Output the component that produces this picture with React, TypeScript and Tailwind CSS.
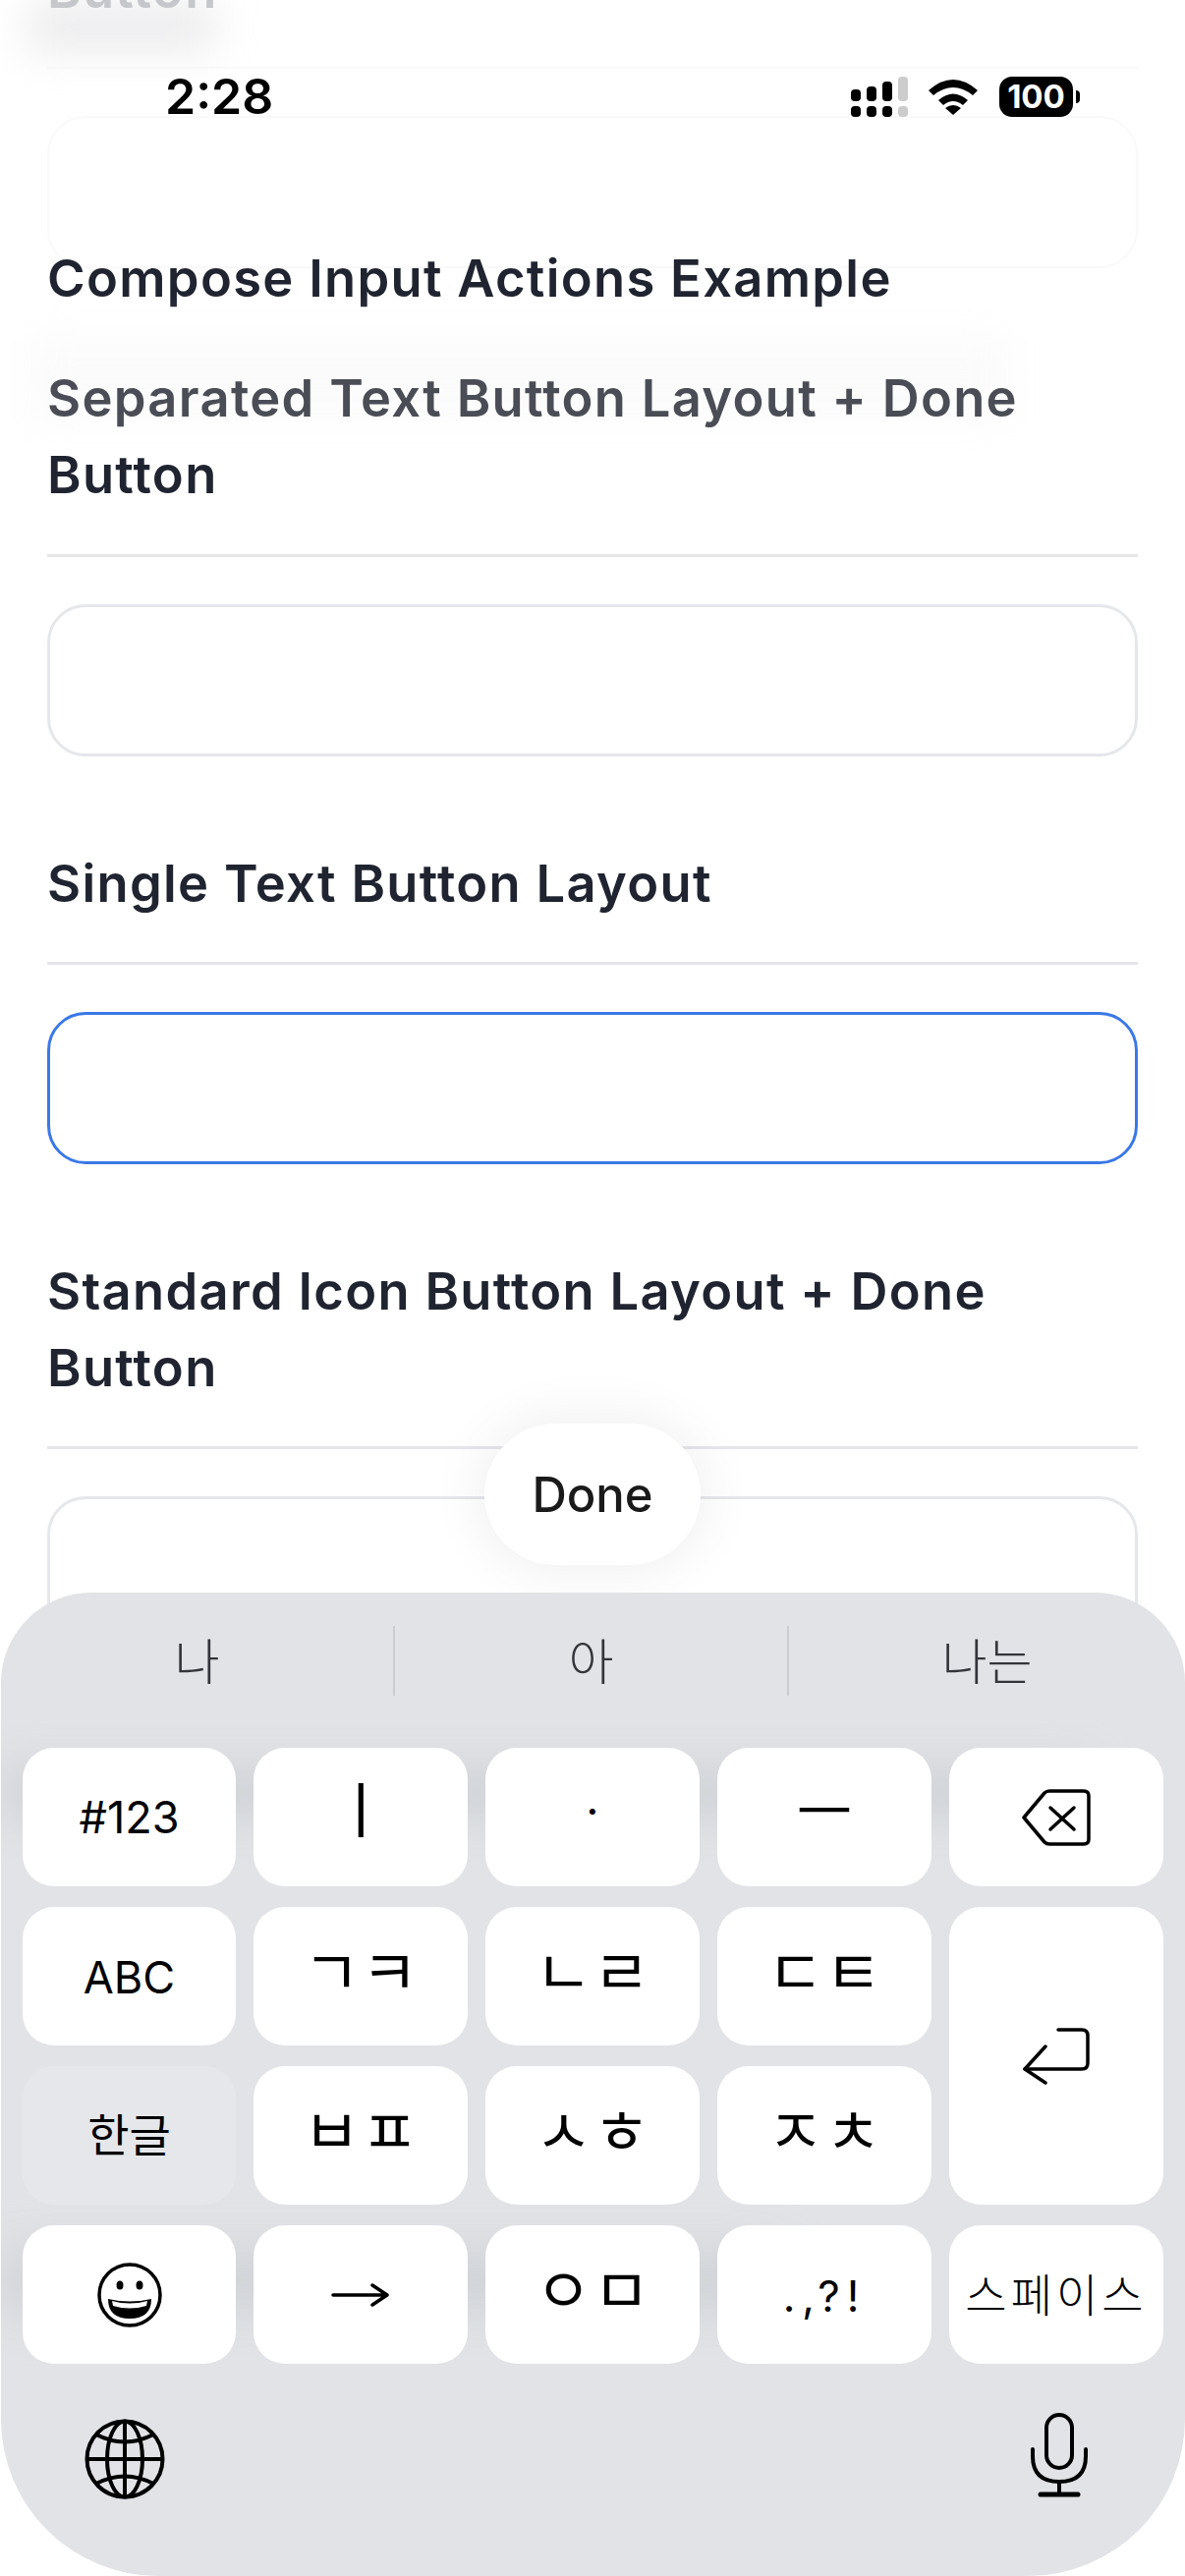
import type { ReactNode } from 'react';

const HEADING = "font-['Inter',sans-serif] font-semibold text-[52.5px] leading-[78px] tracking-[1.3px] text-[#1f2430]";
const KR = "font-['Inter','Noto_Sans_CJK_KR',sans-serif]";

function Section({ lines, focused }: { lines: string[]; focused?: boolean }) {
  return (
    <section className="mt-[90px]">
      <h2 className={HEADING}>
        {lines.map((line) => (
          <div key={line}>{line}</div>
        ))}
      </h2>
      <div className="mt-[41px] h-[3px] bg-[#e5e5ea]" />
      <div
        className={
          focused
            ? 'mt-[48px] h-[155px] rounded-[39px] border-[3px] border-[#3b78e7] bg-white'
            : 'mt-[48px] h-[155px] rounded-[39px] border-[3px] border-[#e5e7eb] bg-white'
        }
      />
    </section>
  );
}

function Key({ children, className = '' }: { children: ReactNode; className?: string }) {
  return (
    <div className={`flex items-center justify-center rounded-[32px] text-black ${KR} ${className || 'bg-white'}`}>
      {children}
    </div>
  );
}

function Pair({ a, b }: { a: string; b: string }) {
  return (
    <div className="mb-[8px] flex gap-[1px] text-[63px] leading-none">
      <span>{a}</span>
      <span>{b}</span>
    </div>
  );
}

function StatusBar() {
  return (
    <div className="absolute left-0 right-0 top-[72px] flex h-[52px] items-center justify-between pl-[168px] pr-[114px]">
      <span className="font-['Inter',sans-serif] text-[50px] font-semibold leading-none text-black">2:28</span>
      <div className="flex items-center">
        <svg width="60" height="42" viewBox="0 0 60 42" className="mr-[20px]">
          <rect x="2" y="14" width="10" height="12" rx="4" />
          <rect x="18" y="11" width="10" height="15" rx="4" />
          <rect x="34" y="6" width="10" height="20" rx="4" />
          <rect x="50" y="1" width="10" height="25" rx="4" fill="#cccccc" />
          <rect x="2" y="31" width="10" height="11" rx="4" />
          <rect x="18" y="31" width="10" height="11" rx="4" />
          <rect x="34" y="31" width="10" height="11" rx="4" />
          <rect x="50" y="31" width="10" height="11" rx="4" fill="#cccccc" />
        </svg>
        <svg width="52" height="40" viewBox="0 0 52 40" className="mr-[21px]">
          <path d="M1 14 Q26 -8 51 14 L46 19 Q26 3 6 19 Z" />
          <path d="M11 24 Q26 11 41 24 L36 29 Q26 21 16 29 Z" />
          <path d="M18 32 Q26 26 34 32 L26 39 Z" />
        </svg>
        <div className="relative flex h-[41px] w-[75px] items-center justify-center rounded-[13px] bg-black">
          <span className="font-['Inter',sans-serif] text-[33px] font-bold leading-none text-white">100</span>
          <div className="absolute left-[78px] top-[14px] h-[13px] w-[4px] rounded-r-full bg-black" />
        </div>
      </div>
    </div>
  );
}

function Keyboard() {
  return (
    <div className="absolute bottom-0 left-[1px] right-0 h-[1001px] overflow-hidden rounded-t-[92px] rounded-b-[160px] bg-[#e2e3e6]">
      {/* soft bands of the page blurred through the glass */}
      <div className="absolute left-0 right-[100px] top-[178px] h-[50px] bg-[#d0d2d7] blur-[22px]" />
      <div className="absolute left-0 right-[420px] top-[670px] h-[60px] bg-[#d0d2d7] blur-[24px]" />

      <div className="relative flex h-[107px] items-center pt-[32px] text-[#33353b]">
        {['나', '아', '나는'].map((word, i) => (
          <div
            key={word}
            className={
              i < 2
                ? `flex h-[71px] w-[401px] items-center justify-center border-r-[2px] border-[#cbccd1] pb-[4px] font-['Noto_Sans_CJK_KR',sans-serif] text-[50px] font-light`
                : `flex h-[71px] flex-1 items-center justify-center pb-[4px] font-['Noto_Sans_CJK_KR',sans-serif] text-[50px] font-light`
            }
          >
            {word}
          </div>
        ))}
      </div>

      <div className="relative mt-[51px] grid grid-cols-[217px_218px_218px_218px_218px] grid-rows-[141px_141px_141px_141px] gap-x-[18px] gap-y-[21px] pl-[22px]">
        <Key><span className="text-[45px] leading-none">#123</span></Key>
        <Key><span className="mb-[12px] text-[62px] leading-none">ㅣ</span></Key>
        <Key><span className="mb-[14px] text-[46px] leading-none">·</span></Key>
        <Key><span className="mb-[10px] text-[62px] leading-none">ㅡ</span></Key>
        <Key>
          <svg width="70" height="58" viewBox="0 0 70 58" fill="none" stroke="black" strokeWidth="3.5" strokeLinejoin="round" strokeLinecap="round">
            <path d="M2 29 L23 4 Q25 2 28 2 H63 Q68 2 68 7 V51 Q68 56 63 56 H28 Q25 56 23 54 Z" />
            <path d="M29 19 L53 41 M53 19 L29 41" />
          </svg>
        </Key>

        <Key><span className="mt-[2px] text-[45px] leading-none">ABC</span></Key>
        <Key><Pair a="ㄱ" b="ㅋ" /></Key>
        <Key><Pair a="ㄴ" b="ㄹ" /></Key>
        <Key><Pair a="ㄷ" b="ㅌ" /></Key>
        <Key className="row-span-2 bg-white">
          <svg width="68" height="58" viewBox="0 0 68 58" fill="none" stroke="black" strokeWidth="3.5" strokeLinejoin="round" strokeLinecap="round">
            <path d="M36 2 H60 Q66 2 66 8 V36 Q66 42 60 42 H2" />
            <path d="M23 19 L2 42 L23 56" />
          </svg>
        </Key>

        <Key className="bg-[#e6e7ea]"><span className="mb-[2px] text-[46px] leading-none">한글</span></Key>
        <Key><Pair a="ㅂ" b="ㅍ" /></Key>
        <Key><Pair a="ㅅ" b="ㅎ" /></Key>
        <Key><Pair a="ㅈ" b="ㅊ" /></Key>

        <Key>
          <svg width="66" height="66" viewBox="0 0 66 66" fill="none" stroke="black" strokeWidth="3.5">
            <circle cx="33" cy="33" r="31" />
            <ellipse cx="23" cy="23" rx="3.5" ry="4.5" fill="black" stroke="none" />
            <ellipse cx="43" cy="23" rx="3.5" ry="4.5" fill="black" stroke="none" />
            <path d="M11 37 Q33 42 55 37 Q55 57 33 57 Q11 57 11 37 Z" fill="black" stroke="none" />
            <path d="M15 39 Q33 44 51 39 L50 44 Q33 49 16 44 Z" fill="white" stroke="none" />
          </svg>
        </Key>
        <Key>
          <svg width="60" height="24" viewBox="0 0 60 24" fill="none" stroke="black" strokeWidth="3.5" strokeLinecap="round" strokeLinejoin="round">
            <path d="M2 12 H57 M42 2 L57 12 L42 22" />
          </svg>
        </Key>
        <Key><Pair a="ㅇ" b="ㅁ" /></Key>
        <Key>
          <span className="mt-[2px] text-[44px] leading-none tracking-[7px]">.,?!</span>
        </Key>
        <Key>
          <span className="font-light text-[46px] leading-none tracking-[4px]">스페이스</span>
        </Key>
      </div>

      <div className="absolute bottom-[78px] left-[85px]">
        <svg width="82" height="82" viewBox="0 0 82 82" fill="none" stroke="black" strokeWidth="4">
          <circle cx="41" cy="41" r="38.5" />
          <ellipse cx="41" cy="41" rx="18" ry="38.5" />
          <path d="M41 3 V79 M3 41 H79" />
          <path d="M12 16 Q41 31 70 16 M12 66 Q41 51 70 66" />
        </svg>
      </div>
      <div className="absolute bottom-[80px] right-[99px]">
        <svg width="58" height="86" viewBox="0 0 58 86" fill="none" stroke="black" strokeWidth="4" strokeLinecap="round">
          <rect x="16" y="2" width="26" height="54" rx="13" />
          <path d="M2 37 V44 Q2 70 29 70 Q56 70 56 44 V37" />
          <path d="M29 70 V83" />
          <path d="M10 83 H48" strokeWidth="5" />
        </svg>
      </div>
    </div>
  );
}

export default function App() {
  return (
    <div className="relative h-[2622px] w-[1206px] overflow-hidden bg-white">
      {/* page content scrolled under the status bar */}
      <div className="px-[48px]">
        <div className="relative -mt-[50px] h-[120px] border-b-[2px] border-[#fafafb]">
          <div className="absolute -left-[20px] top-[52px] h-[50px] w-[190px] bg-[#ececee] blur-[20px]" />
          <div className={`relative ${HEADING} text-[#c5c7cb]`}>Button</div>
        </div>
        <div className="mt-[48px] h-[155px] rounded-[39px] border-[2px] border-[#f9f9fa]" />

        <h2 className={`-mt-[29px] relative ${HEADING}`}>Compose Input Actions Example</h2>

        <section className="relative mt-[44px]">
          <div className="absolute -left-[20px] -top-[20px] h-[80px] w-[1000px] bg-[#fbfbfb] blur-[20px]" />
          <h2 className={`relative ${HEADING}`}>
            <div className="text-[#4a4d55]">Separated Text Button Layout + Done</div>
            <div>Button</div>
          </h2>
          <div className="mt-[42px] h-[3px] bg-[#e5e5ea]" />
          <div className="mt-[48px] h-[155px] rounded-[39px] border-[3px] border-[#e5e7eb] bg-white" />
        </section>

        <Section lines={['Single Text Button Layout']} focused />
        <Section lines={['Standard Icon Button Layout + Done', 'Button']} />
      </div>

      <StatusBar />

      <div className="absolute left-[493px] top-[1449px] flex h-[144px] w-[220px] items-center justify-center rounded-[72px] bg-white shadow-[0_0_60px_rgba(0,0,0,0.08)]">
        <span className="mt-[1px] font-['Inter',sans-serif] text-[49px] font-medium leading-none text-[#1a1a1a]">Done</span>
      </div>

      <Keyboard />
    </div>
  );
}
